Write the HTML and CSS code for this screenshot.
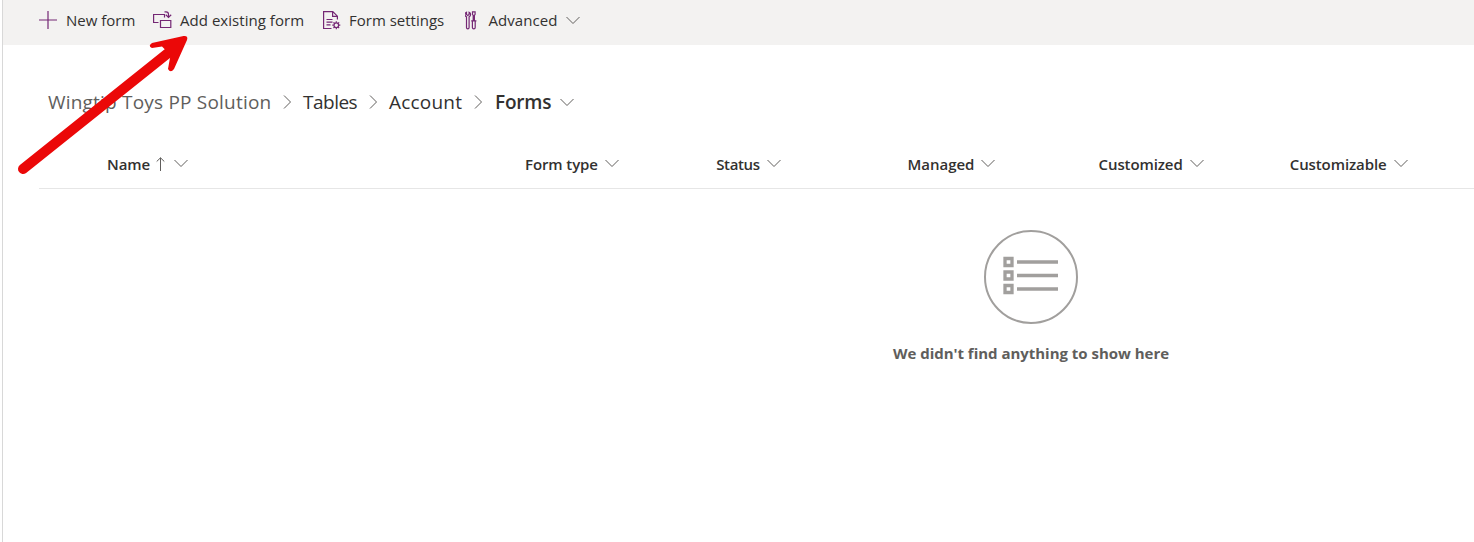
FILE: index.html
```html
<!DOCTYPE html>
<html lang="en">
<head>
<meta charset="utf-8">
<title>Forms</title>
<link rel="stylesheet" href="styles.css">
</head>
<body>
<svg class="defs" width="0" height="0" aria-hidden="true">
  <symbol id="down" viewBox="0 0 14 9"><path d="M.5 1 7 7.5 13.5 1" fill="none" stroke="currentColor"/></symbol>
  <symbol id="right" viewBox="0 0 9 14"><path d="M1 .5 7.5 7 1 13.5" fill="none" stroke="currentColor"/></symbol>
</svg>
<main class="app">
  <nav class="toolbar">
    <button class="cmd cmd-new">
      <svg class="icon" width="18" height="18" viewBox="0 0 18 18"><path d="M9 0v18M0 9h18"/></svg>
      <span>New form</span>
    </button>
    <button class="cmd cmd-add">
      <svg class="icon" width="19" height="18" viewBox="0 0 19 18"><path d="M5.500 11.500H.6V3.500H11.500V6.500M7.500 9.500h10.300v7H7.500zM11.500 .8h1.500q2.500 0 2.500 2.500V6M12.800 3.800l2.700 2.600L18.200 3.800"/></svg>
      <span>Add existing form</span>
    </button>
    <button class="cmd cmd-settings">
      <svg class="icon" width="18" height="19" viewBox="0 0 18 19"><path d="M8.500 17.500H.6V.6h9.200l4.600 4.600v3.300M9.600.8v4.600h4.600M3.500 8.500h6M3.500 11.200h6M3.500 13.800h4"/><circle cx="13.300" cy="14.200" r="2.300"/><path d="M13.300 10.200v1.500M13.300 16.700v1.500M9.300 14.200h1.500M15.800 14.200h1.500M10.500 11.400l1.100 1.100M15 15.900l1.100 1.100M16.100 11.400 15 12.500M11.600 15.900 10.500 17"/></svg>
      <span>Form settings</span>
    </button>
    <button class="cmd cmd-advanced">
      <svg class="icon" width="12" height="19" viewBox="0 0 12 19"><path d="M1.500 5.800A2.500 2.500 0 0 1 1.500 1.200v2.300l1.300.9 1.300-.9V1.200a2.500 2.500 0 0 1 0 4.600v10.700a1.300 1.300 0 0 1-2.600 0zM7.500.9h2.600v2.400l-.7 1.200v5H8.200v-5l-.7-1.200zM6.200 9.800h5.200M7.400 9.800v6.700a1.400 1.400 0 0 0 2.800 0V9.800"/></svg>
      <span>Advanced</span>
      <svg class="down" width="14" height="9"><use href="#down"/></svg>
    </button>
  </nav>
  <div class="crumbs">
    <a class="crumb crumb-root">Wingtip Toys PP Solution</a>
    <svg class="right" width="9" height="14"><use href="#right"/></svg>
    <a class="crumb crumb-tables">Tables</a>
    <svg class="right" width="9" height="14"><use href="#right"/></svg>
    <a class="crumb crumb-account">Account</a>
    <svg class="right" width="9" height="14"><use href="#right"/></svg>
    <b class="crumb crumb-current">Forms</b>
    <svg class="down" width="14" height="9"><use href="#down"/></svg>
  </div>
  <div class="columns">
    <div class="col col-name"><span>Name</span>
      <svg class="sort" width="9" height="14" viewBox="0 0 9 14"><path d="M4.500 14V.8M.7 4.500 4.500.8l3.800 3.700" fill="none" stroke="currentColor"/></svg>
      <svg class="down" width="14" height="9"><use href="#down"/></svg></div>
    <div class="col col-type"><span>Form type</span><svg class="down" width="14" height="9"><use href="#down"/></svg></div>
    <div class="col col-status"><span>Status</span><svg class="down" width="14" height="9"><use href="#down"/></svg></div>
    <div class="col col-managed"><span>Managed</span><svg class="down" width="14" height="9"><use href="#down"/></svg></div>
    <div class="col col-customized"><span>Customized</span><svg class="down" width="14" height="9"><use href="#down"/></svg></div>
    <div class="col col-customizable"><span>Customizable</span><svg class="down" width="14" height="9"><use href="#down"/></svg></div>
  </div>
  <section class="empty">
    <svg width="94" height="94" viewBox="0 0 94 94">
      <circle cx="47" cy="47" r="46" fill="none" stroke="#a19f9d" stroke-width="2"/>
      <path d="M21 28.500h7v7h-7zM21 42h7v7h-7zM21 55.500h7v7h-7z" fill="none" stroke="#a19f9d" stroke-width="3.300"/>
      <path d="M33 32h41M33 45.500h41M33 59h41" stroke="#a19f9d" stroke-width="3.700"/>
    </svg>
    <p class="message">We didn't find anything to show here</p>
  </section>
</main>
<svg class="arrow" width="180" height="150" viewBox="0 0 180 150"><path d="M8 134 160 12.500" stroke="#eb0808" stroke-width="10" stroke-linecap="round"/><path d="M137 8 168.500 1Q173.500 .5 172 5L159 34Q155.500 38.500 153 34L155.500 20 147 11.500 137 13Q132.500 11 137 8z" fill="#eb0808"/></svg>
</body>
</html>
```
FILE: styles.css
```css
* { box-sizing: border-box; }
body { margin: 0; background: #fff; color: #323130; font-family: "Open Sans", "Noto Sans", sans-serif; overflow: hidden; }
.defs { position: absolute; }
svg { display: block; flex: none; }
.app { margin-left: 2px; height: 542px; border-left: 1px solid #d8d8d8; }
.toolbar { display: flex; height: 45px; padding: 0 0 5px 36px; background: #f3f2f1; }
.cmd { display: flex; align-items: center; flex: none; padding: 0; border: 0; background: none; color: inherit; font: 15px/20px "Open Sans", sans-serif; white-space: nowrap; }
.cmd span { margin-top: -1px; }
.icon { fill: none; stroke: #742774; stroke-width: 1.2; }
.cmd-new { width: 114px; gap: 9px; }
.cmd-add { width: 170px; gap: 8px; letter-spacing: .04px; }
.cmd-settings { width: 142px; gap: 8px; }
.cmd-advanced { gap: 9px; letter-spacing: .06px; }
.cmd-advanced .icon { margin-right: 2.500px; }
.down, .right, .sort { color: #605e5c; }
.crumbs { display: flex; align-items: center; height: 28px; margin: 43px 0 0 45px; font-size: 19px; line-height: 28px; white-space: nowrap; }
.crumb { flex: none; }
.crumb-root { width: 235px; color: #605e5c; letter-spacing: .2px; }
.right { margin-right: 11px; }
.crumb-tables { width: 66px; letter-spacing: -.5px; }
.crumb-account { width: 85px; letter-spacing: .2px; }
.crumb-current { width: 66px; padding-left: 1px; font-weight: 600; letter-spacing: -.2px; }
.columns { display: flex; height: 49px; margin: 24px 0 0 36px; border-bottom: 1px solid #e6e6e6; font-size: 15px; font-weight: 600; line-height: 20px; }
.col { display: flex; align-items: center; gap: 7px; flex: none; width: 191.2px; white-space: nowrap; letter-spacing: -.1px; }
.col .down { margin-top: -2px; }
.col-name { width: 486px; padding-left: 68px; gap: 6px; }
.col-name .down { margin-left: 3px; }
.col-status { letter-spacing: -.35px; }
.col-managed { letter-spacing: 0; }
.empty { display: flex; flex-direction: column; align-items: center; width: 400px; margin: 41px 0 0 828px; }
.message { margin: 18px 0 0; color: #605e5c; font-size: 15px; font-weight: 700; line-height: 22px; letter-spacing: -.02px; white-space: nowrap; }
.arrow { position: absolute; left: 15px; top: 35px; fill: none; }
```
